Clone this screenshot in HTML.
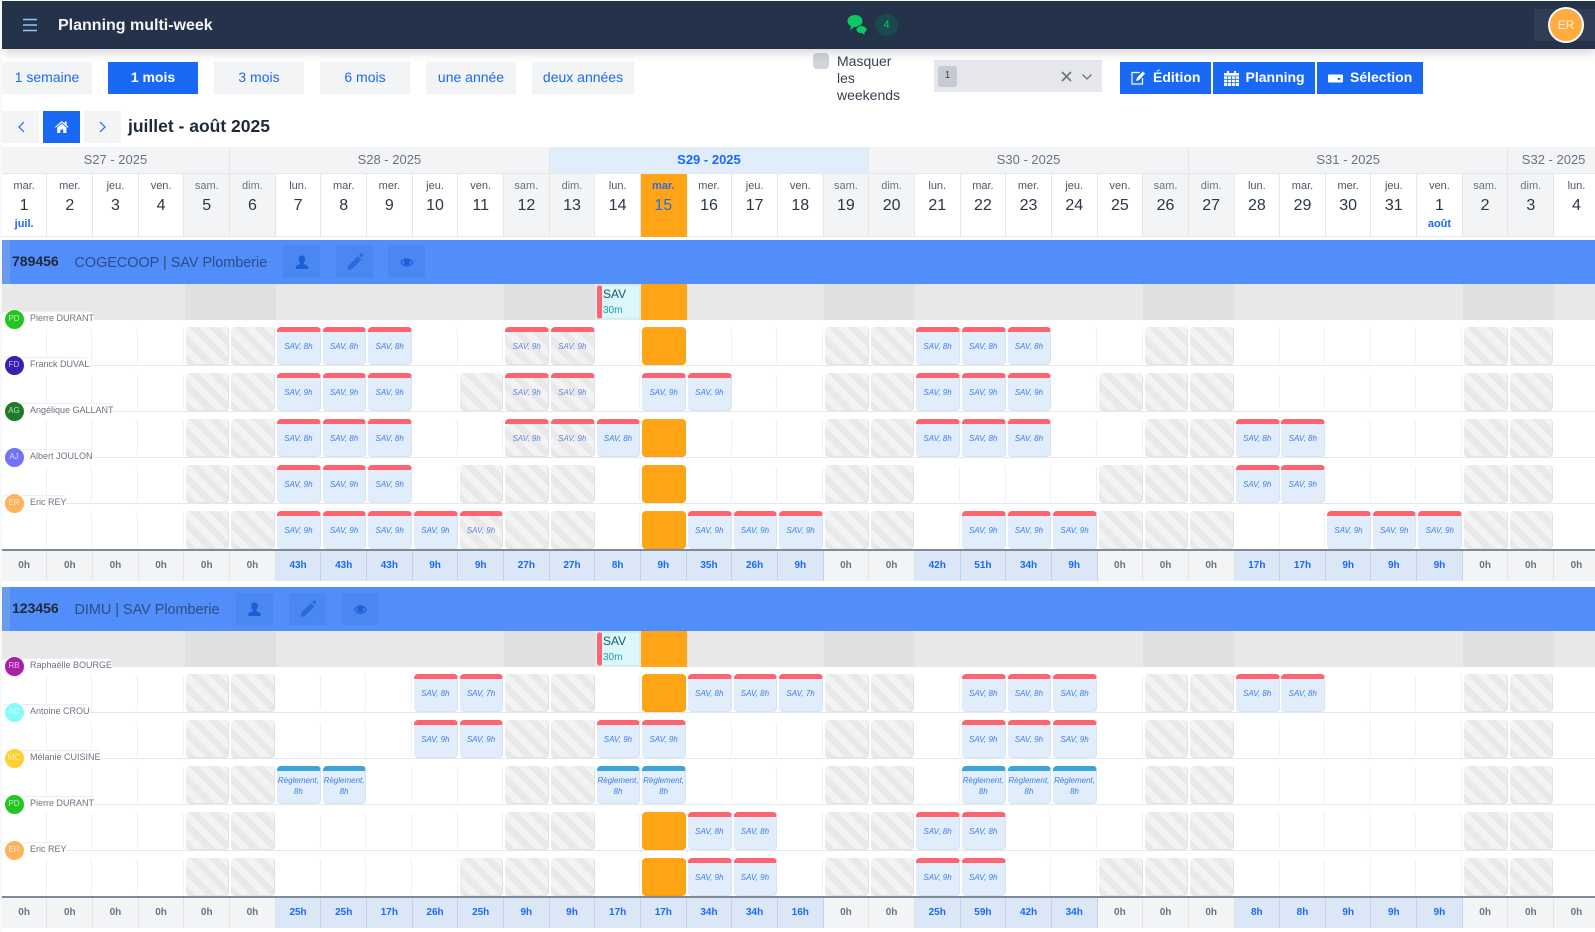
<!DOCTYPE html>
<html lang="fr"><head><meta charset="utf-8"><title>Planning multi-week</title>
<style>
*{box-sizing:border-box}
html,body{margin:0;padding:0;background:#fff}
#p{position:relative;width:1595px;height:932px;overflow:hidden;font-family:"Liberation Sans",sans-serif;background:#fff}
.a{position:absolute}
#edge{left:0;top:0;width:2px;height:932px;background:#f7f8fa;z-index:9}
#nav{left:2px;top:1px;width:1593px;height:48px;background:#243349;box-shadow:0 4px 10px rgba(0,0,0,.16);z-index:4}
#title{left:58px;top:17px;font:bold 16px/18px "Liberation Sans",sans-serif;color:#f3f4f6;z-index:5}
.tb{position:absolute;top:62px;height:32px;background:#f3f4f6;color:#1a69f5;font-size:14px;line-height:31px;text-align:center}
.tb.on{background:#1a69f5;color:#fff;font-weight:bold}
.ab{position:absolute;top:62px;height:32px;background:#1a69f5;color:#fff;font-size:14px;font-weight:bold;line-height:31px}
.ab span{position:absolute;top:0}
.ab svg{position:absolute}
.nb{position:absolute;top:111px;width:37px;height:32px;background:#f3f4f6}
.g{position:absolute;left:1.8px;display:grid;grid-template-columns:repeat(35,45.67px);width:1599px}
.wk{height:27px;background:#f3f4f6;border-right:1px solid #e5e7eb;border-bottom:1px solid #e5e7eb;font-size:13px;line-height:26px;text-align:center;color:#6b7280}
.wk.c{background:#e1edfb;color:#1a69f5;font-weight:bold}
.d{height:63px;border-right:1px solid #e5e7eb;border-bottom:1px solid #e5e7eb;text-align:center;padding-top:5px;color:#374151;background:#fff}
.d em{display:block;font-style:normal;font-size:11px;line-height:14px;color:#4b5563}
.d big{display:block;font-size:16px;line-height:24px;color:#2b3648;position:relative;top:1px}
.d small{display:block;font-size:11px;line-height:15px;color:#1a69f5;font-weight:bold}
.d.w{background:#f3f4f6}
.d.w em{color:#6b7280}
.d.o{background:#ffa415;border-color:#ffa415}
.d.o em{color:#2c6de0;font-weight:bold}
.d.o big{color:#2c6de0}
.blk{position:absolute;left:0;width:1595px;height:345px}
.ban{position:absolute;left:2px;top:0;width:1593px;height:44px;background:#518ef9}
.ban:before{content:"";position:absolute;left:0;top:0;width:8px;height:44px;background:#6a9bee}
.num{position:absolute;left:12px;top:0;font:bold 14px/43px "Liberation Sans",sans-serif;color:#1f2937}
.nm{position:absolute;left:74.500px;top:0;font-size:14.4px;line-height:46px;color:#2d4c88}
.ib{position:absolute;top:6px;width:37px;height:32px;background:#4a87f0}
.ib svg{position:absolute;left:0;top:0}
.gr{position:absolute;left:2px;top:44px;width:1593px;height:36px;background:#e8e8e8}
.we{position:absolute;top:44px;height:36px;width:91px;background:#dfe0e2}
.tdy{position:absolute;top:44px;height:36px;left:641px;width:46px;background:#ffa415}
.sav{position:absolute;left:597px;top:45px;width:43px;height:34px;background:#dcf6fa;border:1px solid #c6eff6;border-left:5px solid #fe646f;border-radius:3px;z-index:2;padding-left:1px}
.sav span{display:block;font-size:12px;line-height:16px;color:#0e5f6a;margin-top:0}
.sav small{display:block;font-size:10px;line-height:15px;color:#1f9aa8;margin-top:1px}
.rw{position:absolute;left:0;height:46px;width:1599px;border-bottom:1px solid #e5e7eb}
.rw .g{left:1.1px;top:0;grid-template-columns:repeat(35,45.66px)}
.rw i,.rw b{display:flex;align-items:center;justify-content:center;width:43.7px;height:37.5px;margin:7px 0 0 2px;border-radius:4px;font-style:italic;font-weight:normal;text-align:center}
.rw i{border-right:1.5px solid #eff0f2}
.rw i.h{border-right:1px solid #e0e0e0;border-bottom:1px solid #e4e4e4;background:repeating-linear-gradient(45deg,#e9e9e9 0 7px,#f3f3f3 7px 14px)}
.rw i.o{background:#ffa415;border:0;border-right:1px solid #f0a020;border-bottom:1px solid #f0a020}
.rw b{background:#e1edfb;border-top:5px solid #fe646f;border-right:1px solid #d6e2f0;border-bottom:1px solid #d9e4f1;font-size:8px;line-height:10.6px;color:#3d7de8}
.rw b.h{background:repeating-linear-gradient(45deg,#e9e9e9 0 7px,#f3f3f3 7px 14px);color:#5a86d8}
.rw b.t{border-top-color:#3aa5d6}
.lb{position:absolute;left:2px;height:14px;background:#fff;border-top:1px solid #eceef0;border-radius:4px 4px 0 0;padding-left:28px;font-size:9px;line-height:13px;color:#6b7280;z-index:3;white-space:nowrap}
.av{position:absolute;left:3.5px;width:21px;height:21px;border-radius:50%;border:1.5px solid #fff;font-size:8px;line-height:18px;text-align:center;color:rgba(255,255,255,.7);z-index:4}
.tot{position:absolute;left:1.8px;top:309px;border-top:2px solid #7f8a99;grid-template-columns:repeat(35,45.66px)}
.tot div{height:30px;background:#f3f4f6;border-right:1px solid #e2e4e8;font:bold 10px/30px "Liberation Sans",sans-serif;text-align:center;color:#6b7280}
.tot div.v{background:#dbe7f6;border-right-color:#c3d3e8;color:#1a69f5}
</style></head><body>
<div id="p">
<div class="a" id="edge"></div>
<div class="a" id="nav"></div>
<svg class="a" style="left:23px;top:18px;z-index:5" width="14" height="14" viewBox="0 0 14 14"><path d="M0 1.500h14M0 7h14M0 12.500h14" stroke="#93c5fd" stroke-width="1.600"/></svg>
<div class="a" id="title">Planning multi-week</div>
<svg class="a" style="left:846px;top:13px;z-index:5" width="24" height="24" viewBox="0 0 24 24"><path d="M9 2C4.800 2 1.500 4.600 1.500 8c0 2.300 1.400 4.200 3.600 5.200L4.200 17l4-2.900c.3 0 .6 0 .8 0 4.200 0 7.500-2.700 7.500-6.100S13.200 2 9 2z" fill="#0bc863"/><path d="M15.500 12.500c-3 0-5.500 1.800-5.500 4.100 0 2.300 2.500 4.100 5.500 4.100.2 0 .4 0 .6 0l3.300 2.300-.6-3.100c1.400-.8 2.300-1.900 2.300-3.300 0-2.300-2.600-4.100-5.600-4.100z" fill="#0bc863" stroke="#243349" stroke-width="1"/></svg>
<div class="a" style="left:875px;top:14px;width:23px;height:22px;border-radius:50%;background:#1b4a4e;color:#0bc863;font-size:11px;line-height:22px;text-align:center;z-index:5">4</div>
<div class="a" style="left:1534px;top:9px;width:61px;height:32px;background:#2f3e54;z-index:5"></div>
<div class="a" style="left:1548px;top:7px;width:36px;height:36px;border-radius:50%;background:#ffab40;border:2px solid #fff;color:#fff4e0;font-size:12px;line-height:32px;text-align:center;z-index:6">ER</div>

<div class="tb" style="left:2px;width:90px">1 semaine</div>
<div class="tb on" style="left:108px;width:90px">1 mois</div>
<div class="tb" style="left:214px;width:90px">3 mois</div>
<div class="tb" style="left:320px;width:90px">6 mois</div>
<div class="tb" style="left:426px;width:90px">une année</div>
<div class="tb" style="left:532px;width:102px">deux années</div>

<div class="a" style="left:813px;top:53px;width:16px;height:16px;border-radius:4px;background:#d1d5db"></div>
<div class="a" style="left:837px;top:53px;font-size:14px;line-height:17px;color:#374151">Masquer<br>les<br>weekends</div>
<div class="a" style="left:934px;top:60px;width:168px;height:32px;background:#e5e7eb"></div>
<div class="a" style="left:938px;top:66px;width:19px;height:21px;background:#c6cbd3;border-radius:3px;font-size:10px;line-height:19px;text-align:center;color:#374151">1</div>
<svg class="a" style="left:1061px;top:70px" width="34" height="14" viewBox="0 0 34 14"><path d="M1 2l9 9M10 2l-9 9" stroke="#6b7280" stroke-width="1.6" fill="none"/><path d="M21.500 4.500l4.500 4.500 4.500-4.500" stroke="#6b7280" stroke-width="1.300" fill="none"/></svg>

<div class="ab" style="left:1120px;width:91px"><svg style="left:11px;top:8px" width="15" height="15" viewBox="0 0 15 15"><path d="M8.500 2.500H1v11.500h10.500V8" stroke="#fff" stroke-width="1.200" fill="none"/><path d="M5 11l.8-3L11.800 1.500l2.300 2L8 10z" fill="#fff"/></svg><span style="left:33px">Édition</span></div>
<div class="ab" style="left:1213px;width:102px"><svg style="left:11px;top:9px" width="15" height="15" viewBox="0 0 15 15"><path d="M0 2h15v13H0z" fill="#fff"/><path d="M3 0h2v3H3zM10 0h2v3h-2z" fill="#fff"/><path d="M0 5h15M0 8.300h15M0 11.600h15M3.700 5v10M7.500 5v10M11.300 5v10" stroke="#1a69f5" stroke-width=".8"/></svg><span style="left:32.500px">Planning</span></div>
<div class="ab" style="left:1317px;width:106px"><svg style="left:11px;top:12px" width="15" height="9" viewBox="0 0 15 9"><path d="M0 1.500q0-1 1-1h13q1 0 1 1v6q0 1-1 1H1q-1 0-1-1z" fill="#fff"/><path d="M9.500 4h3v1.200l-1.500 1-1.500-1z" fill="#1a69f5"/></svg><span style="left:33px">Sélection</span></div>

<div class="nb" style="left:2px"><svg width="37" height="32" viewBox="0 0 37 32"><path d="M22 11l-5 5 5 5" stroke="#1a69f5" stroke-width="1.200" fill="none"/></svg></div>
<div class="nb" style="left:43px;background:#1a69f5"><svg width="37" height="32" viewBox="0 0 37 32"><path d="M18.800 10L12 16l.8.800 6-5.300 6 5.300.8-.8-2-1.800V10.500h-1.800v2.100z" fill="#fff"/><path d="M14.200 16.600l4.600-4 4.600 4V22h-3.200v-3.500h-2.800V22h-3.200z" fill="#fff"/></svg></div>
<div class="nb" style="left:84px"><svg width="37" height="32" viewBox="0 0 37 32"><path d="M16 11l5 5-5 5" stroke="#1a69f5" stroke-width="1.200" fill="none"/></svg></div>
<div class="a" style="left:128px;top:114px;font:bold 17.500px/24px 'Liberation Sans',sans-serif;color:#1f2937">juillet - août 2025</div>

<div class="g" style="top:147px">
<div class="wk" style="grid-column:span 5">S27 - 2025</div>
<div class="wk" style="grid-column:span 7">S28 - 2025</div>
<div class="wk c" style="grid-column:span 7">S29 - 2025</div>
<div class="wk" style="grid-column:span 7">S30 - 2025</div>
<div class="wk" style="grid-column:span 7">S31 - 2025</div>
<div class="wk" style="grid-column:span 2">S32 - 2025</div>
</div>
<div class="g" style="top:174px">
<div class="d"><em>mar.</em><big>1</big><small>juil.</small></div>
<div class="d"><em>mer.</em><big>2</big></div>
<div class="d"><em>jeu.</em><big>3</big></div>
<div class="d"><em>ven.</em><big>4</big></div>
<div class="d w"><em>sam.</em><big>5</big></div>
<div class="d w"><em>dim.</em><big>6</big></div>
<div class="d"><em>lun.</em><big>7</big></div>
<div class="d"><em>mar.</em><big>8</big></div>
<div class="d"><em>mer.</em><big>9</big></div>
<div class="d"><em>jeu.</em><big>10</big></div>
<div class="d"><em>ven.</em><big>11</big></div>
<div class="d w"><em>sam.</em><big>12</big></div>
<div class="d w"><em>dim.</em><big>13</big></div>
<div class="d"><em>lun.</em><big>14</big></div>
<div class="d o"><em>mar.</em><big>15</big></div>
<div class="d"><em>mer.</em><big>16</big></div>
<div class="d"><em>jeu.</em><big>17</big></div>
<div class="d"><em>ven.</em><big>18</big></div>
<div class="d w"><em>sam.</em><big>19</big></div>
<div class="d w"><em>dim.</em><big>20</big></div>
<div class="d"><em>lun.</em><big>21</big></div>
<div class="d"><em>mar.</em><big>22</big></div>
<div class="d"><em>mer.</em><big>23</big></div>
<div class="d"><em>jeu.</em><big>24</big></div>
<div class="d"><em>ven.</em><big>25</big></div>
<div class="d w"><em>sam.</em><big>26</big></div>
<div class="d w"><em>dim.</em><big>27</big></div>
<div class="d"><em>lun.</em><big>28</big></div>
<div class="d"><em>mar.</em><big>29</big></div>
<div class="d"><em>mer.</em><big>30</big></div>
<div class="d"><em>jeu.</em><big>31</big></div>
<div class="d"><em>ven.</em><big>1</big><small>août</small></div>
<div class="d w"><em>sam.</em><big>2</big></div>
<div class="d w"><em>dim.</em><big>3</big></div>
<div class="d"><em>lun.</em><big>4</big></div>
</div>

<!-- BLOCK 1 -->
<div class="blk" style="top:240px">
<div class="ban"></div><div class="num">789456</div><div class="nm">COGECOOP | SAV Plomberie</div>
<div class="ib" style="left:283px"><svg width="37" height="32" viewBox="0 0 37 32"><path d="M18.900 9.500c2.200 0 3.300 1.600 3.300 3.600 0 1.700-.7 3-1.600 3.800v1.200c2.400.7 4.400 1.500 4.400 3V23H12.800v-1.900c0-1.500 2-2.300 4.400-3v-1.200c-.9-.8-1.600-2.100-1.600-3.800 0-2 1.100-3.600 3.300-3.600z" fill="#1a5fd8"/></svg></div>
<div class="ib" style="left:336px"><svg width="37" height="32" viewBox="0 0 37 32"><path d="M11.500 24l1-4.500 9.500-9.500 3.500 3.500-9.500 9.500z" fill="#2a6ae0"/><path d="M23 9l1.300-1.300c.6-.5 1.300-.5 1.800 0l.7.7c.5.6.5 1.300 0 1.800l-1.300 1.300z" fill="#2a6ae0"/></svg></div>
<div class="ib" style="left:388px"><svg width="38" height="32" viewBox="0 0 38 32"><path d="M13 16.500c1.800-2.600 3.800-3.600 6-3.600s4.200 1 6 3.600c-1.800 2.600-3.800 3.600-6 3.600s-4.200-1-6-3.600z" fill="none" stroke="#1f60d8" stroke-width="1.200"/><circle cx="19" cy="16" r="3.200" fill="#1f60d8"/></svg></div>
<div class="gr"></div>
<div class="we" style="left:185px"></div><div class="we" style="left:504px"></div><div class="we" style="left:823.700px"></div><div class="we" style="left:1143.400px"></div><div class="we" style="left:1463.200px"></div>
<div class="tdy"></div>
<div class="sav"><span>SAV</span><small>30m</small></div>

<div class="lb" style="top:71px;width:92px">Pierre DURANT</div><div class="av" style="top:68.500px;background:#22c522">PD</div>
<div class="lb" style="top:117px;width:87px">Franck DUVAL</div><div class="av" style="top:114.500px;background:#3b1fb0">FD</div>
<div class="lb" style="top:163px;width:111px">Angélique GALLANT</div><div class="av" style="top:160.500px;background:#1f7a2a">AG</div>
<div class="lb" style="top:209px;width:92px">Albert JOULON</div><div class="av" style="top:206.500px;background:#6f74f5">AJ</div>
<div class="lb" style="top:255px;width:64px">Eric REY</div><div class="av" style="top:252.500px;background:#ffb25c">ER</div>

<div class="rw" style="top:80px"><div class="g">
<i></i><i></i><i></i><i></i><i class="h"></i><i class="h"></i><b>SAV, 8h</b><b>SAV, 8h</b><b>SAV, 8h</b><i></i><i></i><b class="h">SAV, 9h</b><b class="h">SAV, 9h</b><i></i><i class="o"></i><i></i><i></i><i></i><i class="h"></i><i class="h"></i><b>SAV, 8h</b><b>SAV, 8h</b><b>SAV, 8h</b><i></i><i></i><i class="h"></i><i class="h"></i><i></i><i></i><i></i><i></i><i></i><i class="h"></i><i class="h"></i><i></i>
</div></div>
<div class="rw" style="top:126px"><div class="g">
<i></i><i></i><i></i><i></i><i class="h"></i><i class="h"></i><b>SAV, 9h</b><b>SAV, 9h</b><b>SAV, 9h</b><i></i><i class="h"></i><b class="h">SAV, 9h</b><b class="h">SAV, 9h</b><i></i><b>SAV, 9h</b><b>SAV, 9h</b><i></i><i></i><i class="h"></i><i class="h"></i><b>SAV, 9h</b><b>SAV, 9h</b><b>SAV, 9h</b><i></i><i class="h"></i><i class="h"></i><i class="h"></i><i></i><i></i><i></i><i></i><i></i><i class="h"></i><i class="h"></i><i></i>
</div></div>
<div class="rw" style="top:172px"><div class="g">
<i></i><i></i><i></i><i></i><i class="h"></i><i class="h"></i><b>SAV, 8h</b><b>SAV, 8h</b><b>SAV, 8h</b><i></i><i></i><b class="h">SAV, 9h</b><b class="h">SAV, 9h</b><b>SAV, 8h</b><i class="o"></i><i></i><i></i><i></i><i class="h"></i><i class="h"></i><b>SAV, 8h</b><b>SAV, 8h</b><b>SAV, 8h</b><i></i><i></i><i class="h"></i><i class="h"></i><b>SAV, 8h</b><b>SAV, 8h</b><i></i><i></i><i></i><i class="h"></i><i class="h"></i><i></i>
</div></div>
<div class="rw" style="top:218px"><div class="g">
<i></i><i></i><i></i><i></i><i class="h"></i><i class="h"></i><b>SAV, 9h</b><b>SAV, 9h</b><b>SAV, 9h</b><i></i><i class="h"></i><i class="h"></i><i class="h"></i><i></i><i class="o"></i><i></i><i></i><i></i><i class="h"></i><i class="h"></i><i></i><i></i><i></i><i></i><i class="h"></i><i class="h"></i><i class="h"></i><b>SAV, 9h</b><b>SAV, 9h</b><i></i><i></i><i></i><i class="h"></i><i class="h"></i><i></i>
</div></div>
<div class="rw" style="top:264px"><div class="g">
<i></i><i></i><i></i><i></i><i class="h"></i><i class="h"></i><b>SAV, 9h</b><b>SAV, 9h</b><b>SAV, 9h</b><b>SAV, 9h</b><b class="h">SAV, 9h</b><i class="h"></i><i class="h"></i><i></i><i class="o"></i><b>SAV, 9h</b><b>SAV, 9h</b><b>SAV, 9h</b><i class="h"></i><i class="h"></i><i></i><b>SAV, 9h</b><b>SAV, 9h</b><b>SAV, 9h</b><i class="h"></i><i class="h"></i><i class="h"></i><i></i><i></i><b>SAV, 9h</b><b>SAV, 9h</b><b>SAV, 9h</b><i class="h"></i><i class="h"></i><i></i>
</div></div>
<div class="g tot">
<div>0h</div><div>0h</div><div>0h</div><div>0h</div><div>0h</div><div>0h</div><div class="v">43h</div><div class="v">43h</div><div class="v">43h</div><div class="v">9h</div><div class="v">9h</div><div class="v">27h</div><div class="v">27h</div><div class="v">8h</div><div class="v">9h</div><div class="v">35h</div><div class="v">26h</div><div class="v">9h</div><div>0h</div><div>0h</div><div class="v">42h</div><div class="v">51h</div><div class="v">34h</div><div class="v">9h</div><div>0h</div><div>0h</div><div>0h</div><div class="v">17h</div><div class="v">17h</div><div class="v">9h</div><div class="v">9h</div><div class="v">9h</div><div>0h</div><div>0h</div><div>0h</div>
</div>
</div>

<!-- BLOCK 2 -->
<div class="blk" style="top:587px">
<div class="ban"></div><div class="num">123456</div><div class="nm">DIMU | SAV Plomberie</div>
<div class="ib" style="left:236px"><svg width="37" height="32" viewBox="0 0 37 32"><path d="M18.500 9.500c2.200 0 3.300 1.600 3.300 3.600 0 1.700-.7 3-1.600 3.800v1.200c2.400.7 4.400 1.500 4.400 3V23H12.400v-1.900c0-1.500 2-2.300 4.400-3v-1.200c-.9-.8-1.600-2.100-1.600-3.800 0-2 1.100-3.600 3.300-3.600z" fill="#1a5fd8"/></svg></div>
<div class="ib" style="left:289px"><svg width="37" height="32" viewBox="0 0 37 32"><path d="M11.500 24l1-4.500 9.500-9.500 3.500 3.500-9.500 9.500z" fill="#2a6ae0"/><path d="M23 9l1.300-1.300c.6-.5 1.300-.5 1.800 0l.7.7c.5.6.5 1.300 0 1.800l-1.300 1.300z" fill="#2a6ae0"/></svg></div>
<div class="ib" style="left:342px"><svg width="38" height="32" viewBox="0 0 38 32"><path d="M12.500 16.500c1.800-2.600 3.800-3.600 6-3.600s4.200 1 6 3.600c-1.800 2.600-3.800 3.600-6 3.600s-4.200-1-6-3.600z" fill="none" stroke="#1f60d8" stroke-width="1.200"/><circle cx="18.500" cy="16" r="3.200" fill="#1f60d8"/></svg></div>
<div class="gr"></div>
<div class="we" style="left:185px"></div><div class="we" style="left:504px"></div><div class="we" style="left:823.700px"></div><div class="we" style="left:1143.400px"></div><div class="we" style="left:1463.200px"></div>
<div class="tdy"></div>
<div class="sav"><span>SAV</span><small>30m</small></div>

<div class="lb" style="top:71px;width:110px">Raphaëlle BOURGE</div><div class="av" style="top:68.500px;background:#a81fa8">RB</div>
<div class="lb" style="top:117px;width:88px">Antoine CROU</div><div class="av" style="top:114.500px;background:#86fbfb">AC</div>
<div class="lb" style="top:163px;width:98px">Mélanie CUISINE</div><div class="av" style="top:160.500px;background:#ffcf30">MC</div>
<div class="lb" style="top:209px;width:92px">Pierre DURANT</div><div class="av" style="top:206.500px;background:#22c522">PD</div>
<div class="lb" style="top:255px;width:64px">Eric REY</div><div class="av" style="top:252.500px;background:#ffb25c">ER</div>

<div class="rw" style="top:80px"><div class="g">
<i></i><i></i><i></i><i></i><i class="h"></i><i class="h"></i><i></i><i></i><i></i><b>SAV, 8h</b><b>SAV, 7h</b><i class="h"></i><i class="h"></i><i></i><i class="o"></i><b>SAV, 8h</b><b>SAV, 8h</b><b>SAV, 7h</b><i class="h"></i><i class="h"></i><i></i><b>SAV, 8h</b><b>SAV, 8h</b><b>SAV, 8h</b><i></i><i class="h"></i><i class="h"></i><b>SAV, 8h</b><b>SAV, 8h</b><i></i><i></i><i></i><i class="h"></i><i class="h"></i><i></i>
</div></div>
<div class="rw" style="top:126px"><div class="g">
<i></i><i></i><i></i><i></i><i class="h"></i><i class="h"></i><i></i><i></i><i></i><b>SAV, 9h</b><b>SAV, 9h</b><i class="h"></i><i class="h"></i><b>SAV, 9h</b><b>SAV, 9h</b><i></i><i></i><i></i><i class="h"></i><i class="h"></i><i></i><b>SAV, 9h</b><b>SAV, 9h</b><b>SAV, 9h</b><i></i><i class="h"></i><i class="h"></i><i></i><i></i><i></i><i></i><i></i><i class="h"></i><i class="h"></i><i></i>
</div></div>
<div class="rw" style="top:172px"><div class="g">
<i></i><i></i><i></i><i></i><i class="h"></i><i class="h"></i><b class="t">Règlement, 8h</b><b class="t">Règlement, 8h</b><i></i><i></i><i></i><i class="h"></i><i class="h"></i><b class="t">Règlement, 8h</b><b class="t">Règlement, 8h</b><i></i><i></i><i></i><i class="h"></i><i class="h"></i><i></i><b class="t">Règlement, 8h</b><b class="t">Règlement, 8h</b><b class="t">Règlement, 8h</b><i></i><i class="h"></i><i class="h"></i><i></i><i></i><i></i><i></i><i></i><i class="h"></i><i class="h"></i><i></i>
</div></div>
<div class="rw" style="top:218px"><div class="g">
<i></i><i></i><i></i><i></i><i class="h"></i><i class="h"></i><i></i><i></i><i></i><i></i><i></i><i class="h"></i><i class="h"></i><i></i><i class="o"></i><b>SAV, 8h</b><b>SAV, 8h</b><i></i><i class="h"></i><i class="h"></i><b>SAV, 8h</b><b>SAV, 8h</b><i></i><i></i><i></i><i class="h"></i><i class="h"></i><i></i><i></i><i></i><i></i><i></i><i class="h"></i><i class="h"></i><i></i>
</div></div>
<div class="rw" style="top:264px"><div class="g">
<i></i><i></i><i></i><i></i><i class="h"></i><i class="h"></i><i></i><i></i><i></i><i></i><i class="h"></i><i class="h"></i><i class="h"></i><i></i><i class="o"></i><b>SAV, 9h</b><b>SAV, 9h</b><i></i><i class="h"></i><i class="h"></i><b>SAV, 9h</b><b>SAV, 9h</b><i></i><i></i><i class="h"></i><i class="h"></i><i class="h"></i><i></i><i></i><i></i><i></i><i></i><i class="h"></i><i class="h"></i><i></i>
</div></div>
<div class="g tot">
<div>0h</div><div>0h</div><div>0h</div><div>0h</div><div>0h</div><div>0h</div><div class="v">25h</div><div class="v">25h</div><div class="v">17h</div><div class="v">26h</div><div class="v">25h</div><div class="v">9h</div><div class="v">9h</div><div class="v">17h</div><div class="v">17h</div><div class="v">34h</div><div class="v">34h</div><div class="v">16h</div><div>0h</div><div>0h</div><div class="v">25h</div><div class="v">59h</div><div class="v">42h</div><div class="v">34h</div><div>0h</div><div>0h</div><div>0h</div><div class="v">8h</div><div class="v">8h</div><div class="v">9h</div><div class="v">9h</div><div class="v">9h</div><div>0h</div><div>0h</div><div>0h</div>
</div>
</div>
</div>
</body></html>
